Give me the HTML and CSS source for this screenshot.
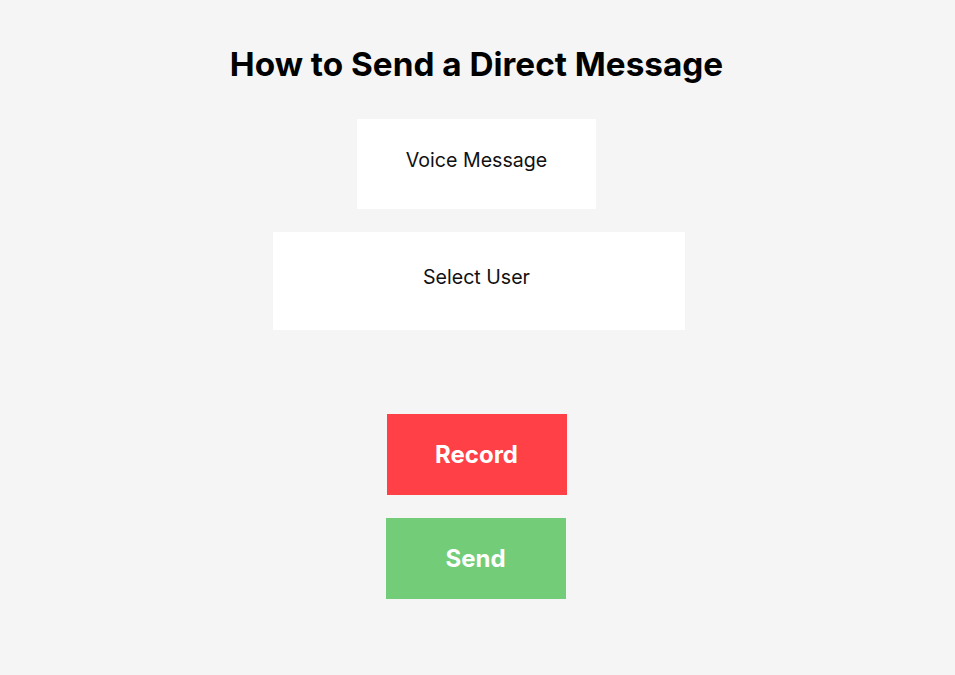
FILE: index.html
```html
<!DOCTYPE html>
<html lang="en">
<head>
<meta charset="utf-8">
<title>How to Send a Direct Message</title>
<link rel="stylesheet" href="styles.css">
</head>
<body>
<main class="page">
  <h1 class="title">How to Send a Direct Message</h1>
  <div class="fields">
    <div class="field field-voice">Voice Message</div>
    <div class="field field-user">Select User</div>
  </div>
  <div class="actions">
    <button class="btn btn-record">Record</button>
    <button class="btn btn-send">Send</button>
  </div>
</main>
</body>
</html>
```
FILE: styles.css
```css
html, body {
  margin: 0;
  padding: 0;
  background: #f5f5f5;
}
body {
  font-family: Inter, "Noto Sans", "Liberation Sans", sans-serif;
  color: #000;
}
.page {
  display: flex;
  flex-direction: column;
  align-items: center;
  padding-top: 44px;
  padding-right: 2px;
}
.title {
  margin: 0 0 35px;
  font-size: 33.3px;
  line-height: 40px;
  font-weight: 700;
  letter-spacing: 0;
}
.fields {
  display: flex;
  flex-direction: column;
  align-items: center;
  gap: 23px;
}
.field {
  background: #fff;
  display: flex;
  align-items: center;
  justify-content: center;
  font-size: 19.6px;
  font-weight: 400;
  color: #111;
}
.field-voice {
  width: 239px;
  height: 90px;
  box-sizing: border-box;
  padding-bottom: 8px;
}
.field-user {
  width: 412px;
  height: 98px;
  box-sizing: border-box;
  padding-bottom: 9px;
  padding-right: 4px;
  margin-left: 4px;
}
.actions {
  margin-top: 84px;
  display: flex;
  flex-direction: column;
  align-items: center;
  gap: 23px;
}
.btn {
  width: 180px;
  height: 81px;
  border: 0;
  padding: 0;
  font-family: inherit;
  font-size: 24px;
  font-weight: 700;
  color: #fff;
}
.btn-record {
  background: #ff4046;
}
.btn-send {
  background: #72cc78;
  margin-right: 2px;
}
```
